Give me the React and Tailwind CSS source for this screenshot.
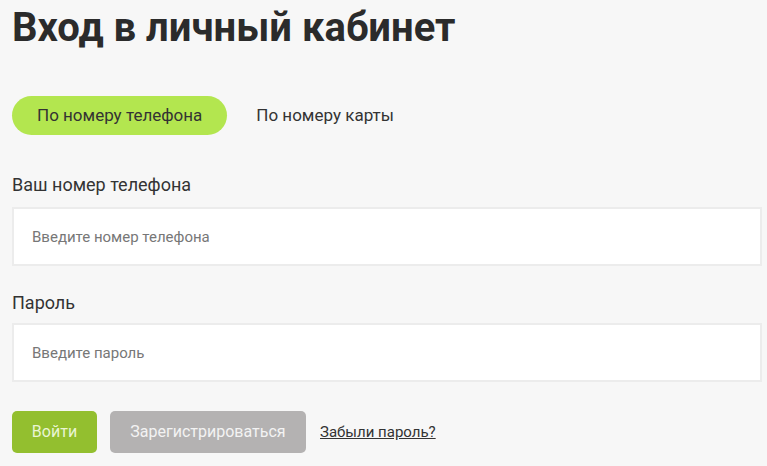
export default function App() {
  return (
    <div
      className="min-h-screen bg-[#f7f7f7] pl-3 pr-[5px] text-[#2d2d2d]"
      style={{ fontFamily: "Roboto, 'Liberation Sans', sans-serif" }}
    >
      <h1 className="pt-[3px] text-[40px] font-bold leading-[50px] text-[#2b2b2b]">
        Вход в личный кабинет
      </h1>

      <div className="mt-[43px] flex items-center">
        <button className="h-[39px] rounded-full bg-[#b3e64f] px-[25px] text-[17px] text-[#333]">
          По номеру телефона
        </button>
        <button className="ml-[29px] h-[39px] text-[17px] text-[#333]">
          По номеру карты
        </button>
      </div>

      <label className="mt-[39px] block text-[18px] leading-[22px] text-[#333]">
        Ваш номер телефона
      </label>
      <input
        placeholder="Введите номер телефона"
        className="mt-[11px] block h-[59px] w-full border-2 border-[#ececec] bg-white px-[18px] text-[15px] outline-none placeholder:text-[#777]"
      />

      <label className="mt-[26px] block text-[18px] leading-[22px] text-[#333]">
        Пароль
      </label>
      <input
        type="password"
        placeholder="Введите пароль"
        className="mt-[9px] block h-[59px] w-full border-2 border-[#ececec] bg-white px-[18px] text-[15px] outline-none placeholder:text-[#777]"
      />

      <div className="mt-[29px] flex items-center">
        <button className="h-[42px] w-[85px] rounded-[5px] bg-[#93bf2f] text-[16px] text-[#eaf5d4]">
          Войти
        </button>
        <button className="ml-[13px] h-[42px] w-[196px] rounded-[5px] bg-[#b4b2b2] text-[16px] text-[#f3f3f3]">
          Зарегистрироваться
        </button>
        <a href="#" className="ml-[14px] text-[15px] text-[#333] underline">
          Забыли пароль?
        </a>
      </div>
    </div>
  );
}
